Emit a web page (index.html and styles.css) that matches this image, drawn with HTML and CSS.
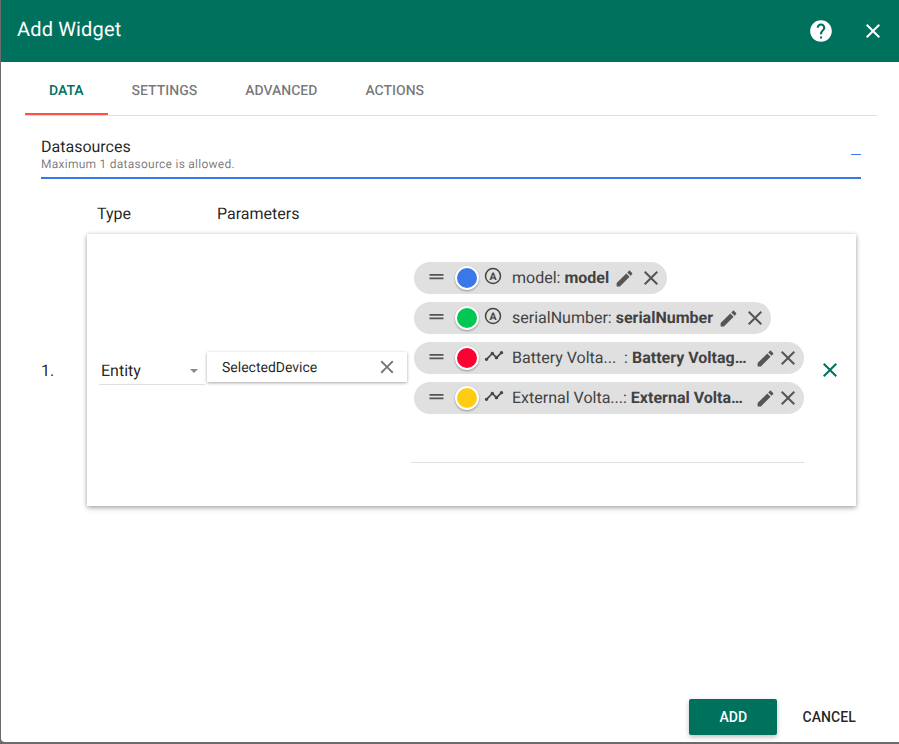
FILE: index.html
```html
<!DOCTYPE html>
<html lang="en">
<head>
  <meta charset="UTF-8" />
  <title>Add Widget</title>
  <link rel="stylesheet" href="styles.css">
</head>
<body>

<svg class="defs" width="0" height="0">
  <symbol id="i-close" viewBox="0 0 24 24"><path d="M19 6.41L17.59 5 12 10.59 6.41 5 5 6.41 10.59 12 5 17.59 6.41 19 12 13.41 17.59 19 19 17.59 13.41 12z"/></symbol>
  <symbol id="i-help" viewBox="0 0 24 24"><path d="M12 2C6.48 2 2 6.48 2 12s4.48 10 10 10 10-4.48 10-10S17.52 2 12 2zm1 17h-2v-2h2v2zm2.07-7.75l-.9.92C13.45 12.9 13 13.5 13 15h-2v-.5c0-1.1.45-2.1 1.17-2.83l1.24-1.26c.37-.36.59-.86.59-1.41 0-1.1-.9-2-2-2s-2 .9-2 2H8c0-2.21 1.79-4 4-4s4 1.79 4 4c0 .88-.36 1.68-.93 2.25z"/></symbol>
  <symbol id="i-drag" viewBox="0 0 24 24"><path d="M20 9H4v2h16V9zM4 15h16v-2H4v2z"/></symbol>
  <symbol id="i-edit" viewBox="0 0 24 24"><path d="M3 17.25V21h3.75L17.81 9.94l-3.75-3.75L3 17.25zM20.71 7.04c.39-.39.39-1.02 0-1.41l-2.34-2.34c-.39-.39-1.02-.39-1.41 0l-1.83 1.83 3.75 3.75 1.83-1.83z"/></symbol>
  <symbol id="i-timeline" viewBox="0 0 24 24"><path d="M23 8c0 1.1-.9 2-2 2-.18 0-.35-.02-.51-.07l-3.56 3.55c.05.16.07.34.07.52 0 1.1-.9 2-2 2s-2-.9-2-2c0-.18.02-.36.07-.52l-2.55-2.55c-.16.05-.34.07-.52.07s-.36-.02-.52-.07l-4.55 4.56c.05.16.07.33.07.51 0 1.1-.9 2-2 2s-2-.9-2-2 .9-2 2-2c.18 0 .35.02.51.07l4.56-4.55C8.02 9.36 8 9.18 8 9c0-1.1.9-2 2-2s2 .9 2 2c0 .18-.02.36-.07.52l2.55 2.55c.16-.05.34-.07.52-.07s.36.02.52.07l3.55-3.56C19.02 8.35 19 8.18 19 8c0-1.1.9-2 2-2s2 .9 2 2z"/></symbol>
</svg>

<div class="dialog">
  <header class="toolbar">
    <h1>Add Widget</h1>
    <svg class="ico help"><use href="#i-help"/></svg>
    <svg class="ico tb-close"><use href="#i-close"/></svg>
  </header>

  <nav class="tabs">
    <a class="tab active">Data</a>
    <a class="tab">Settings</a>
    <a class="tab">Advanced</a>
    <a class="tab">Actions</a>
  </nav>

  <section class="panel">
    <div class="panel-head">
      <div>
        <div class="panel-title">Datasources</div>
        <div class="panel-sub">Maximum 1 datasource is allowed.</div>
      </div>
      <span class="collapse"></span>
    </div>

    <div class="cols">
      <span class="col-type">Type</span>
      <span>Parameters</span>
    </div>

    <div class="row">
      <span class="row-num">1.</span>
      <div class="card">
        <div class="select">
          <span>Entity</span>
          <i class="arrow"></i>
        </div>
        <div class="entity">
          <span>SelectedDevice</span>
          <svg class="ico entity-x"><use href="#i-close"/></svg>
        </div>
        <div class="chips">
          <div class="chip">
            <svg class="ico drag"><use href="#i-drag"/></svg>
            <span class="dot blue"></span>
            <svg class="type-ico" viewBox="0 0 24 24"><circle cx="12" cy="12" r="10" fill="none" stroke="#444" stroke-width="2"/><text x="12" y="17" text-anchor="middle" class="attr">A</text></svg>
            <span class="label">model: <b>model</b></span>
            <svg class="ico edit"><use href="#i-edit"/></svg>
            <svg class="ico chip-x"><use href="#i-close"/></svg>
          </div>
          <div class="chip">
            <svg class="ico drag"><use href="#i-drag"/></svg>
            <span class="dot green"></span>
            <svg class="type-ico" viewBox="0 0 24 24"><circle cx="12" cy="12" r="10" fill="none" stroke="#444" stroke-width="2"/><text x="12" y="17" text-anchor="middle" class="attr">A</text></svg>
            <span class="label">serialNumber: <b>serialNumber</b></span>
            <svg class="ico edit"><use href="#i-edit"/></svg>
            <svg class="ico chip-x"><use href="#i-close"/></svg>
          </div>
          <div class="chip wide">
            <svg class="ico drag"><use href="#i-drag"/></svg>
            <span class="dot red"></span>
            <svg class="ico series"><use href="#i-timeline"/></svg>
            <span class="label">Battery Volta... &nbsp;: <b>Battery Voltag…</b></span>
            <svg class="ico edit"><use href="#i-edit"/></svg>
            <svg class="ico chip-x"><use href="#i-close"/></svg>
          </div>
          <div class="chip wide">
            <svg class="ico drag"><use href="#i-drag"/></svg>
            <span class="dot yellow"></span>
            <svg class="ico series"><use href="#i-timeline"/></svg>
            <span class="label">External Volta...: <b>External Volta…</b></span>
            <svg class="ico edit"><use href="#i-edit"/></svg>
            <svg class="ico chip-x"><use href="#i-close"/></svg>
          </div>
        </div>
        <svg class="ico row-x"><use href="#i-close"/></svg>
      </div>
    </div>
  </section>

  <footer class="actions">
    <button class="btn primary">Add</button>
    <button class="btn">Cancel</button>
  </footer>
</div>

</body>
</html>
```

FILE: styles.css
```css
* {
  box-sizing: border-box;
}

html, body {
  height: 100%;
}

body {
  margin: 0;
  background: #6b6b6b;
  font-family: Roboto, sans-serif;
  color: rgba(0,0,0,0.87);
  text-rendering: geometricPrecision;
  overflow: hidden;
}

.defs {
  position: absolute;
}

.ico {
  display: block;
  flex: none;
  fill: currentColor;
}

.dialog {
  margin-left: 1px;
  height: 742px;
  background: #fff;
  border-bottom-left-radius: 4px;
  display: flex;
  flex-direction: column;
}

/* header */
.toolbar {
  height: 62px;
  flex: none;
  background: #00715d;
  color: #fff;
  display: flex;
  align-items: center;
  padding: 0 14px 0 16px;
}

.toolbar h1 {
  margin: 0 auto 4px 0;
  font-size: 20px;
  font-weight: 400;
  letter-spacing: 0.15px;
}

.help {
  width: 26px;
  height: 26px;
  margin-right: 27px;
}

.tb-close {
  width: 24px;
  height: 24px;
}

/* tabs */
.tabs {
  flex: none;
  display: flex;
  height: 54px;
  margin: 0 22px 0 24px;
  border-bottom: 1px solid #e0e0e0;
}

.tab {
  padding: 0 24px;
  line-height: 59px;
  height: 53px;
  font-size: 14px;
  font-weight: 500;
  text-transform: uppercase;
  color: rgba(0,0,0,0.54);
}

.tab.active {
  color: #00715d;
  border-bottom: 2px solid #ff5043;
}

/* datasources */
.panel {
  padding: 0 38px 0 40px;
}

.panel-head {
  height: 63px;
  padding-top: 21px;
  border-bottom: 2px solid #3b78e7;
  display: flex;
  justify-content: space-between;
}

.panel-title {
  font-size: 16px;
  line-height: 20px;
}

.panel-sub {
  font-size: 12px;
  line-height: 14px;
  letter-spacing: 0.25px;
  color: rgba(0,0,0,0.54);
}

.collapse {
  width: 10px;
  height: 1px;
  margin-top: 17px;
  background: #3b78e7;
}

.cols {
  display: flex;
  margin-top: 25px;
  padding-left: 56px;
  font-size: 16px;
  line-height: 20px;
}

.col-type {
  width: 120px;
}

.row {
  display: flex;
  align-items: center;
  margin-top: 10px;
}

.row-num {
  width: 46px;
  flex: none;
  font-size: 16px;
}

.card {
  width: 769px;
  height: 272px;
  flex: none;
  display: flex;
  align-items: center;
  padding-left: 12px;
  background: #fff;
  box-shadow: 0 2px 5px rgba(0,0,0,0.3), 0 0 4px rgba(0,0,0,0.12);
}

.select {
  width: 106px;
  height: 30px;
  flex: none;
  display: flex;
  align-items: center;
  justify-content: space-between;
  padding: 1px 7px 0 2px;
  font-size: 16px;
  border-bottom: 1px solid #e0e0e0;
}

.arrow {
  border-left: 4.5px solid transparent;
  border-right: 4.5px solid transparent;
  border-top: 4.5px solid #8a8a8a;
  margin-top: 2px;
}

.entity {
  width: 200px;
  height: 30px;
  flex: none;
  margin: 0 4px 6px 2px;
  padding: 1px 9px 0 15px;
  display: flex;
  align-items: center;
  justify-content: space-between;
  font-size: 14px;
  background: #fff;
  box-shadow: 0 1px 3px rgba(0,0,0,0.35);
}

.entity-x {
  width: 22px;
  height: 22px;
  margin-top: -1px;
  color: #757575;
}

/* chips */
.chips {
  width: 393px;
  height: 216px;
  flex: none;
  padding: 0 0 16px 3px;
  display: flex;
  flex-direction: column;
  align-items: flex-start;
  gap: 8px;
  background: linear-gradient(#e0e0e0, #e0e0e0) left 200px / 100% 1px no-repeat;
}

.chip {
  height: 32px;
  display: flex;
  align-items: center;
  padding-left: 12px;
  padding-right: 4px;
  border-radius: 16px;
  background: #e0e0e0;
  color: #424242;
  font-size: 16px;
}

.chip.wide {
  width: 390px;
}

.drag {
  width: 21px;
  height: 21px;
  margin-top: -4px;
  margin-right: 8px;
  color: #555;
}

.dot {
  width: 24px;
  height: 24px;
  flex: none;
  border-radius: 50%;
  border: 2px solid #fff;
  box-shadow: 0 1px 2px rgba(0,0,0,0.35);
  margin-right: 6px;
}

.blue { background: #3b78e7; }
.green { background: #00c853; }
.red { background: #ff0033; }
.yellow { background: #ffcc14; }

.type-ico {
  width: 18px;
  height: 18px;
  flex: none;
  margin-top: -5px;
  margin-right: 10px;
  margin-left: -1px;
}

.attr {
  font-size: 14px;
  font-weight: 700;
  fill: #444;
  font-family: Roboto, sans-serif;
}

.series {
  width: 20px;
  height: 20px;
  margin-top: -4px;
  margin-left: -1px;
  margin-right: 8px;
  color: #444;
}

.label {
  white-space: nowrap;
  margin-top: -2px;
}

.label b {
  font-weight: 700;
}

.edit {
  width: 21px;
  height: 21px;
  margin-left: 5px;
  color: #555;
}

.chip-x {
  width: 24px;
  height: 24px;
  margin-left: 4px;
  color: #555;
}

.chip.wide .edit {
  margin-left: auto;
}

.chip.wide .chip-x {
  margin-left: 0;
}

.row-x {
  width: 24px;
  height: 24px;
  margin-left: 14px;
  color: #00715d;
}

/* footer */
.actions {
  margin-top: auto;
  display: flex;
  justify-content: flex-end;
  align-items: center;
  padding: 0 31px 7px 0;
}

.btn {
  height: 36px;
  border: 0;
  background: none;
  font-family: inherit;
  font-size: 14px;
  font-weight: 500;
  letter-spacing: 0.1px;
  text-transform: uppercase;
  color: rgba(0,0,0,0.87);
  padding: 0 12px;
}

.btn.primary {
  width: 88px;
  margin-right: 13px;
  border-radius: 2px;
  background: #00715d;
  color: #fff;
  box-shadow: 0 2px 5px rgba(0,0,0,0.26);
}
```
